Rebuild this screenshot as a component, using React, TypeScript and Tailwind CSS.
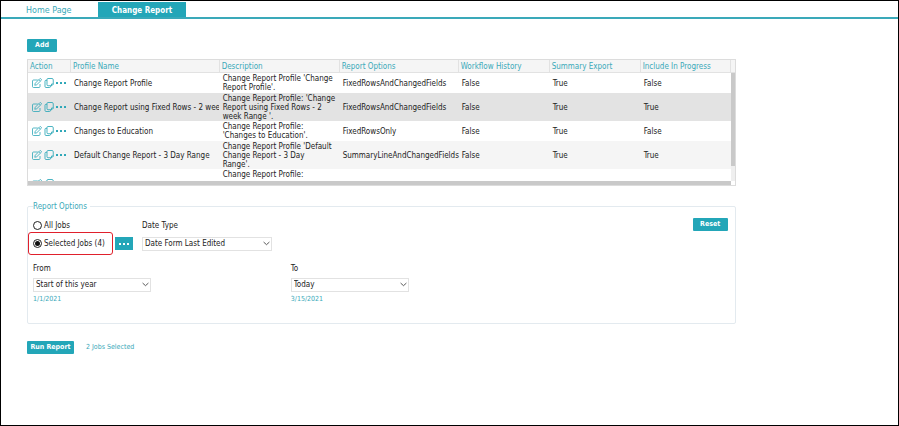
import { useState } from "react";

type Profile = {
  name: string;
  description: string;
  options: string;
  workflow: string;
  summary: string;
  inProgress: string;
  row: string;
};

const profiles: Profile[] = [
  {
    name: "Change Report Profile",
    description: "Change Report Profile 'Change\nReport Profile'.",
    options: "FixedRowsAndChangedFields",
    workflow: "False",
    summary: "True",
    inProgress: "False",
    row: "h-5 bg-white",
  },
  {
    name: "Change Report using Fixed Rows - 2 week",
    description: "Change Report Profile: 'Change\nReport using Fixed Rows - 2\nweek Range '.",
    options: "FixedRowsAndChangedFields",
    workflow: "False",
    summary: "True",
    inProgress: "True",
    row: "h-7 bg-[#e3e3e3]",
  },
  {
    name: "Changes to Education",
    description: "Change Report Profile:\n'Changes to Education'.",
    options: "FixedRowsOnly",
    workflow: "False",
    summary: "True",
    inProgress: "False",
    row: "h-5 bg-white",
  },
  {
    name: "Default Change Report - 3 Day Range",
    description: "Change Report Profile 'Default\nChange Report - 3 Day\nRange'.",
    options: "SummaryLineAndChangedFields",
    workflow: "False",
    summary: "True",
    inProgress: "True",
    row: "h-7 bg-[#f5f5f5]",
  },
  {
    name: "",
    description: "Change Report Profile:",
    options: "",
    workflow: "",
    summary: "",
    inProgress: "",
    row: "h-[30px] bg-white [&>td:nth-child(3)]:pt-px [&>td:nth-child(3)]:align-top",
  },
];

// Profile Name takes whatever is left over
const columns = [
  { label: "Action", width: "w-[43px]" },
  { label: "Profile Name", width: "" },
  { label: "Description", width: "w-[120px]" },
  { label: "Report Options", width: "w-[119px]" },
  { label: "Workflow History", width: "w-[91px]" },
  { label: "Summary Export", width: "w-[91px]" },
  { label: "Include In Progress", width: "w-[90px]" },
];

const buttonStyle =
  "h-[13px] rounded-[1px] bg-[#23a6b8] text-[7px] leading-[13px] font-bold text-white";

function EditIcon() {
  return (
    <svg viewBox="0 0 20 20" className="size-[10px]" fill="none" stroke="currentColor" strokeWidth="1.6">
      <path d="M11.500 4H3C1.800 4 1 4.800 1 6V17C1 18.200 1.800 19 3 19H14C15.200 19 16 18.200 16 17V12" />
      <path d="M5.500 14.500L6.500 10.500L15.500 1.500C16.200 .8 17 .8 17.600 1.500L18.600 2.500C19.200 3.100 19.200 3.900 18.600 4.600L9.500 13.500Z" />
      <path d="M14 3.500L16.700 6.300" />
    </svg>
  );
}

function CopyIcon() {
  return (
    <svg viewBox="0 0 20 20" className="size-[10px]" fill="none" stroke="currentColor" strokeWidth="1.7">
      <path d="M8 1H16C17.500 1 18.500 2 18.500 3.500V12.500L15.500 15.500H8C6.800 15.500 6 14.700 6 13.500V3C6 1.800 6.800 1 8 1Z" />
      <path d="M18.500 12H15V15.500" />
      <path d="M6 4.500H4C2.800 4.500 2 5.300 2 6.500V17C2 18.200 2.800 19 4 19H11C12.200 19 13 18.200 13 17V15.500" />
    </svg>
  );
}

function DotsIcon() {
  return (
    <svg viewBox="0 0 10 2" className="h-[2px] w-[10px]" fill="currentColor">
      <rect x="0" width="2" height="2" rx=".3" />
      <rect x="4" width="2" height="2" rx=".3" />
      <rect x="8" width="2" height="2" rx=".3" />
    </svg>
  );
}

function SelectBox({ id, options, width }: { id: string; options: string[]; width: string }) {
  return (
    <div className={`relative ${width}`}>
      <select
        id={id}
        className="block h-[14px] w-full appearance-none border border-[#e2e2e2] bg-white pl-[2px] text-[8px] leading-[12px] text-[#222]"
      >
        {options.map((o) => (
          <option key={o}>{o}</option>
        ))}
      </select>
      <svg
        viewBox="0 0 12 8"
        className="pointer-events-none absolute top-1 right-[2px] h-[5px] w-[7px]"
        fill="none"
        stroke="#444"
        strokeWidth="1.5"
      >
        <path d="M1 1.500L6 6L11 1.500" />
      </svg>
    </div>
  );
}

export default function App() {
  const [jobs, setJobs] = useState("selected");

  const radio =
    "size-[9px] shrink-0 appearance-none rounded-full border border-[#222] bg-white p-px checked:bg-[#111] bg-clip-content";

  return (
    <div className="min-h-screen border border-black bg-white text-[8px] leading-[9px] text-[#222] [font-family:'DejaVu_Sans_Condensed','DejaVu_Sans',sans-serif]">
      {/* tabs */}
      <nav className="flex border-b-2 border-[#3aa9b9] pt-px">
        <a
          href="#home"
          className="h-[15px] w-[97px] pl-[25px] leading-[18px] text-[#3aa9b9] [font-family:'DejaVu_Sans',sans-serif]"
        >
          Home Page
        </a>
        <a href="#report" className="h-[15px] w-[88px] bg-[#23a6b8] text-center leading-[18px] font-bold text-white">
          Change Report
        </a>
      </nav>

      <main className="ml-[26px] w-[79%] pt-5">
        <button className={`${buttonStyle} block w-[30px]`}>Add</button>

        {/* profiles */}
        <div className="mt-[7px] border border-[#dcdcdc]">
          <div className="flex h-[121px]">
            <div className="min-w-0 flex-1 overflow-hidden">
              <table className="w-full table-fixed border-separate border-spacing-0">
                <thead>
                  <tr className="h-[13px] bg-[#f5f5f5] text-left text-[#3aa9b9]">
                    {columns.map((c) => (
                      <th
                        key={c.label}
                        className={`${c.width} border-r border-b border-[#e2e2e2] p-0 pl-[2px] font-normal whitespace-nowrap`}
                      >
                        {c.label}
                      </th>
                    ))}
                  </tr>
                </thead>
                <tbody>
                  {profiles.map((p, i) => (
                    <tr key={i} className={p.row}>
                      <td className="p-0 pl-1">
                        <div className="flex items-center gap-[2px] text-[#2ba6b7]">
                          <button aria-label="Edit">
                            <EditIcon />
                          </button>
                          <button aria-label="Copy">
                            <CopyIcon />
                          </button>
                          <button aria-label="More">
                            <DotsIcon />
                          </button>
                        </div>
                      </td>
                      <td className="p-0 pl-[3px]">
                        <div className="mr-px overflow-hidden whitespace-nowrap">{p.name}</div>
                      </td>
                      <td className="p-0 pl-[3px] whitespace-pre-line">{p.description}</td>
                      <td className="p-0 pl-[3px] whitespace-nowrap">{p.options}</td>
                      <td className="p-0 pl-[3px]">{p.workflow}</td>
                      <td className="p-0 pl-[3px]">{p.summary}</td>
                      <td className="p-0 pl-[3px]">{p.inProgress}</td>
                    </tr>
                  ))}
                </tbody>
              </table>
            </div>
            <div className="flex w-1 flex-col bg-[#efefef]">
              <div className="h-[13px] border-b border-[#e2e2e2] bg-[#f5f5f5]" />
              <div className="h-[93px] bg-[#c9c9c9]" />
            </div>
          </div>
          <div className="mr-1 h-1 bg-[#c9c9c9]" />
        </div>

        {/* report options */}
        <fieldset className="mt-4 h-[122px] rounded-[2px] border border-[#e3eaef] px-[5px]">
          <legend className="px-0 pr-[3px] text-[#3aa9b9]">Report Options</legend>

          <div className="flex items-start pt-[7px]">
            <div className="w-[109px]">
              <label className="flex h-[14px] items-center gap-[2px]">
                <input type="radio" name="jobs" className={radio} checked={jobs === "all"} onChange={() => setJobs("all")} />
                All Jobs
              </label>
              <div className="-ml-[5px] flex items-center gap-[2px]">
                <label className="flex h-[23px] w-[85px] items-center gap-[2px] rounded-[3px] border border-[#e0202c] pl-1 whitespace-nowrap">
                  <input type="radio" name="jobs" className={radio} checked={jobs === "selected"} onChange={() => setJobs("selected")} />
                  Selected Jobs (4)
                </label>
                <button aria-label="Choose jobs" className="flex h-[13px] w-[18px] items-center justify-center bg-[#23a6b8] text-white">
                  <DotsIcon />
                </button>
              </div>
            </div>
            <div>
              <label htmlFor="dateType" className="block h-[19px] leading-[15px]">
                Date Type
              </label>
              <SelectBox id="dateType" width="w-[130px]" options={["Date Form Last Edited", "Date Form Created"]} />
            </div>
            <button className={`${buttonStyle} mr-[2px] ml-auto w-[35px]`}>Reset</button>
          </div>

          <div className="flex pt-[9px]">
            <div className="w-[37%]">
              <label htmlFor="from" className="block h-[14px]">
                From
              </label>
              <SelectBox id="from" width="w-[118px]" options={["Start of this year", "Today"]} />
              <p className="pt-[3px] text-[7px] text-[#3aa9b9]">1/1/2021</p>
            </div>
            <div>
              <label htmlFor="to" className="block h-[14px]">
                To
              </label>
              <SelectBox id="to" width="w-[118px]" options={["Today", "Start of this year"]} />
              <p className="pt-[3px] text-[7px] text-[#3aa9b9]">3/15/2021</p>
            </div>
          </div>
        </fieldset>

        <div className="mt-[17px] flex items-center gap-3">
          <button className={`${buttonStyle} w-[47px]`}>Run Report</button>
          <span className="text-[7px] text-[#3aa9b9]">2 Jobs Selected</span>
        </div>
      </main>
    </div>
  );
}
